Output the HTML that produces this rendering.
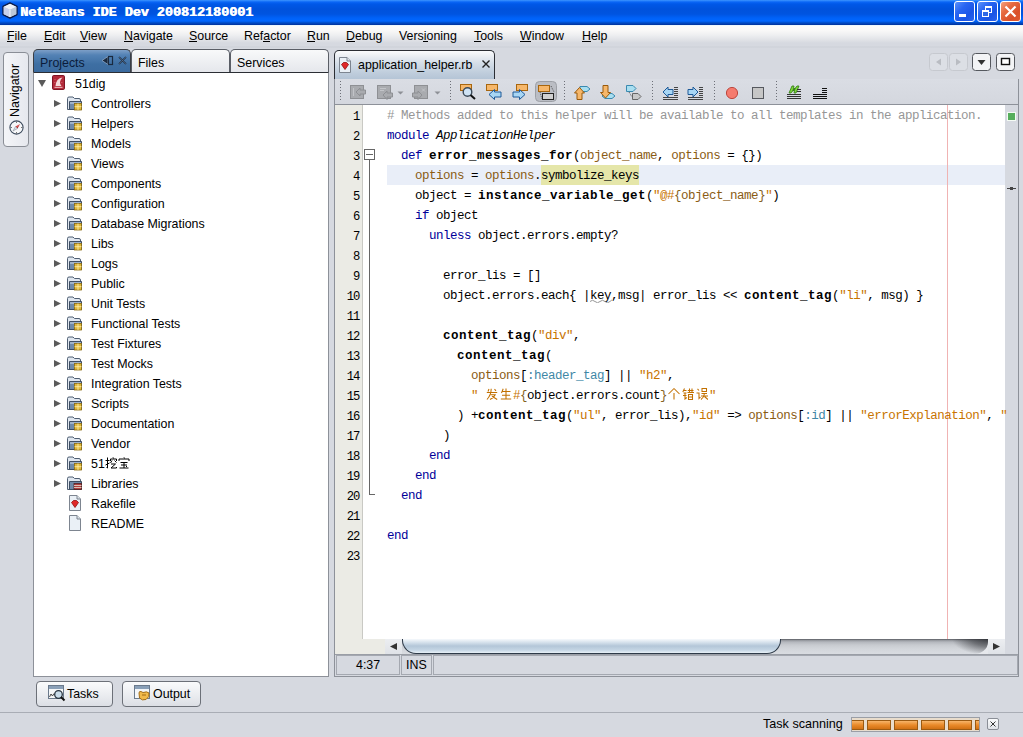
<!DOCTYPE html>
<html><head><meta charset="utf-8"><style>
*{margin:0;padding:0;box-sizing:border-box}
html,body{width:1023px;height:737px;overflow:hidden;background:#d6d9e0;font-family:"Liberation Sans",sans-serif;font-size:12.4px;color:#000}
.a{position:absolute}
.t{position:absolute;white-space:pre;line-height:1}
#title{left:0;top:0;width:1023px;height:25px;background:linear-gradient(#3d95ff 0,#0a66f6 2px,#0058e8 4px,#0052dc 9px,#0054e0 14px,#0062f8 18px,#0066ff 21px,#0050d0 22.5px,#00309a 25px)}
#ttext{left:20px;top:6px;font-family:"Liberation Mono",monospace;font-weight:bold;font-size:13.4px;color:#fff;text-shadow:0.7px 0 0 #fff}
.wb{top:1px;width:21px;height:21px;border:1px solid #fff;border-radius:3px;background:linear-gradient(135deg,#5b92fb 0,#2865f2 35%,#1a55e6 70%,#2a64ee 100%)}
#menu{left:0;top:25px;width:1023px;height:23px;background:linear-gradient(#e4f4fe 0,#fbfbfa 1.5px,#faf9f8 5px,#eeeff1 10px,#dddfe4 16px,#d6d9e0 18px,#d6d9e0 21px,#ccd0d7 22px,#d6d9e0 23px)}
.mi{top:30px}
.ul{position:absolute;height:1px;background:#000}
.tab{position:absolute;border:1px solid #3a3d44;border-bottom:none;border-radius:5px 5px 0 0}
.code{position:absolute;left:387px;font-family:"Liberation Mono",monospace;font-size:12.5px;letter-spacing:-0.5px;white-space:pre;line-height:20px;color:#000;margin-top:1px}
.kw{color:#000099}.cm{color:#969696}.b{font-weight:bold;letter-spacing:0.5px}.pa{color:#8a5c14}.st{color:#c87400}.em{color:#86621e}.sy{color:#3f87a6}
.ln{position:absolute;width:20px;text-align:right;font-family:"Liberation Mono",monospace;font-size:12.2px;letter-spacing:-1.2px;line-height:20px;margin-top:1px}
.it{font-style:italic}.wv{}</style></head><body>
<div id="title" class="a"></div>
<svg class="a" style="left:2px;top:2px" width="16" height="17" viewBox="0 0 16 17">
<path d="M8 1 L15 4.5 L15 12.5 L8 16 L1 12.5 L1 4.5 Z" fill="#c9d3e6" stroke="#0a1a48" stroke-width="1.4" stroke-linejoin="round"/>
<path d="M1.7 4.8 L8 7.8 L14.3 4.8 L8 1.8 Z" fill="#eef2f8"/>
<path d="M8 7.8 L8 15.2 L14.3 12.2 L14.3 4.8 Z" fill="#bcc8d8"/>
<path d="M1.7 4.8 L8 7.8 L8 15.2 L1.7 12.2Z" fill="#c8d0ec"/>
<path d="M8 7.8 V15" stroke="#f4f8ff" stroke-width="1"/>
</svg>
<div id="ttext" class="t">NetBeans IDE Dev 200812180001</div>
<div class="a wb" style="left:954px"></div>
<div class="a wb" style="left:977px"></div>
<div class="a wb" style="left:1000px;background:linear-gradient(135deg,#f4a27f 0,#e66a3f 35%,#d9502a 70%,#e05a30 100%)"></div>
<div class="a" style="left:959px;top:14px;width:7px;height:3px;background:#fff"></div>
<div class="a" style="left:985px;top:6px;width:7px;height:7px;border:1px solid #fff;border-top-width:2px"></div>
<div class="a" style="left:982px;top:10px;width:7px;height:7px;border:1px solid #fff;border-top-width:2px;background:#2f68e6"></div>
<svg class="a" style="left:1004px;top:5px" width="13" height="13" viewBox="0 0 13 13"><path d="M1.5 1.5 L11.5 11.5 M11.5 1.5 L1.5 11.5" stroke="#fff" stroke-width="2.2"/></svg>
<div id="menu" class="a"></div>
<div class="t mi" style="left:7px">File</div>
<div class="t mi" style="left:44px">Edit</div>
<div class="t mi" style="left:80px">View</div>
<div class="t mi" style="left:124px">Navigate</div>
<div class="t mi" style="left:189px">Source</div>
<div class="t mi" style="left:244px">Refactor</div>
<div class="t mi" style="left:307px">Run</div>
<div class="t mi" style="left:346px">Debug</div>
<div class="t mi" style="left:399px">Versioning</div>
<div class="t mi" style="left:474px">Tools</div>
<div class="t mi" style="left:520px">Window</div>
<div class="t mi" style="left:582px">Help</div>
<div class="ul" style="left:7px;top:41px;width:7px"></div>
<div class="ul" style="left:44px;top:41px;width:8px"></div>
<div class="ul" style="left:80px;top:41px;width:8px"></div>
<div class="ul" style="left:124px;top:41px;width:9px"></div>
<div class="ul" style="left:189px;top:41px;width:8px"></div>
<div class="ul" style="left:263px;top:41px;width:7px"></div>
<div class="ul" style="left:307px;top:41px;width:8px"></div>
<div class="ul" style="left:346px;top:41px;width:9px"></div>
<div class="ul" style="left:423px;top:41px;width:5px"></div>
<div class="ul" style="left:474px;top:41px;width:7px"></div>
<div class="ul" style="left:520px;top:41px;width:11px"></div>
<div class="ul" style="left:582px;top:41px;width:9px"></div>
<div class="a" style="left:3px;top:52px;width:26px;height:95px;border:1px solid #8a8e96;border-radius:4px;background:linear-gradient(90deg,#f4f5f8,#e6e8ee)"></div>
<div class="t" style="left:9px;top:117px;transform-origin:0 0;transform:rotate(-90deg);font-size:12.4px">Navigator</div>
<svg class="a" style="left:9px;top:120px" width="15" height="15" viewBox="0 0 15 15"><circle cx="7.5" cy="7.5" r="6.6" fill="#f6f7f9" stroke="#3e4c5e" stroke-width="1.1"/><path d="M7.5 1.5 V3 M7.5 12 V13.5 M1.5 7.5 H3 M12 7.5 H13.5" stroke="#555" stroke-width="0.8"/><path d="M11 4 L6.5 6.5 L7.5 7.5 Z" fill="#e23a3a"/><path d="M11 4 L8.5 8.5 L7.5 7.5Z" fill="#b01e1e"/><path d="M4 11 L6.5 6.5 L8.5 8.5Z" fill="#d8dde4" stroke="#7a8290" stroke-width="0.5"/></svg>
<div class="a" style="left:33px;top:49px;width:296px;height:24px;background:#d6d9e0"></div>
<div class="tab" style="left:33px;top:49px;width:98px;height:24px;background:linear-gradient(#7d9fc7 0,#5382b5 5px,#3e6fa3 14px,#3a6a9e 24px)"></div>
<div class="tab" style="left:131px;top:49px;width:99px;height:24px;border-color:#5a5e66;background:linear-gradient(#f8f9fa,#e4e6eb)"></div>
<div class="tab" style="left:230px;top:49px;width:99px;height:24px;border-color:#5a5e66;background:linear-gradient(#f8f9fa,#e4e6eb)"></div>
<div class="a" style="left:33px;top:72px;width:296px;height:1px;background:#2b2e34"></div>
<div class="t" style="left:40px;top:57px;color:#0b1c3a">Projects</div>
<div class="t" style="left:138px;top:57px">Files</div>
<div class="t" style="left:237px;top:57px">Services</div>
<svg class="a" style="left:101px;top:55px" width="28" height="12" viewBox="0 0 28 12">
<path d="M1 5.5 L7 1.5 L7 9.5Z" fill="#1a2a40" stroke="#a8c0dc" stroke-width="0.6"/>
<rect x="7.5" y="1.5" width="4" height="8" fill="none" stroke="#1a2a40" stroke-width="1.2"/>
<path d="M18 2 L25 9 M25 2 L18 9" stroke="#1a2a40" stroke-width="1.6"/>
<path d="M18 2 L25 9 M25 2 L18 9" stroke="#a8c0dc" stroke-width="0.5" opacity="0.6"/>
</svg>
<div class="a" style="left:33px;top:72px;width:296px;height:605px;background:#fff;border:1px solid #8d9199;border-top-color:#2b2e34"></div>
<svg width="0" height="0" style="position:absolute"><defs>
<symbol id="fold" viewBox="0 0 17 16">
<path d="M1.5 3.5 Q1.5 2 3 2 L7 2 L8.5 3.5 L13 3.5 Q14.5 3.5 14.5 5 L14.5 14.5 L1.5 14.5Z" fill="#dfe6ef" stroke="#4e5e72" stroke-width="1"/>
<path d="M3.5 6.5 L15.5 6.5 L15.5 14.5 L3.5 14.5Z" fill="#6f8aa8" stroke="#3e4e62" stroke-width="1"/>
<path d="M4 7 L15 7 L15 9 L4 9Z" fill="#9fb3ca"/>
<rect x="8.5" y="8.5" width="7" height="6.5" fill="#e2b93a" stroke="#8a6a10" stroke-width="0.8"/>
<path d="M12 8.5 V15 M8.5 11.7 H15.5" stroke="#fff3b0" stroke-width="0.8"/>
</symbol>
<symbol id="libfold" viewBox="0 0 17 16">
<path d="M1.5 3.5 Q1.5 2 3 2 L7 2 L8.5 3.5 L13 3.5 Q14.5 3.5 14.5 5 L14.5 14.5 L1.5 14.5Z" fill="#dfe6ef" stroke="#4e5e72" stroke-width="1"/>
<path d="M3.5 6.5 L15.5 6.5 L15.5 14.5 L3.5 14.5Z" fill="#6f8aa8" stroke="#3e4e62" stroke-width="1"/>
<rect x="8" y="8.5" width="7.5" height="6" fill="#b04040" stroke="#502020" stroke-width="0.8"/>
<path d="M8 10.5 H15.5 M8 12.5 H15.5" stroke="#e8e0d0" stroke-width="0.8"/>
</symbol>
<symbol id="rubyfile" viewBox="0 0 14 16">
<path d="M1.5 0.5 L9 0.5 L12.5 4 L12.5 15.5 L1.5 15.5Z" fill="#eaf0f6" stroke="#7d8590" stroke-width="1"/>
<path d="M9 0.5 L9 4 L12.5 4" fill="#dde3ea" stroke="#7d8590" stroke-width="1"/>
<path d="M3.5 7.5 L5.5 5.5 L8.5 5.5 L10.5 7.5 L7 12.5Z" fill="#e02828" stroke="#901010" stroke-width="0.8"/>
</symbol>
<symbol id="tri-r" viewBox="0 0 7 7"><path d="M0 0 L7 3.5 L0 7Z" fill="#5a5a5a"/></symbol>
</defs></svg>
<svg class="a" style="left:38px;top:80px" width="8" height="7" viewBox="0 0 8 7"><path d="M0 0 L8 0 L4 7Z" fill="#5a5a5a"/></svg>
<svg class="a" style="left:52px;top:75px" width="13" height="15" viewBox="0 0 13 15">
<rect x="0.5" y="0.5" width="12" height="14" rx="1.2" fill="#b32a3a" stroke="#7e1424"/>
<path d="M3.5 11 Q4 7 5.5 5 Q7.5 2.5 10.5 2.5 Q8.5 4 8 7 Q7.8 9.5 9.5 11Z" fill="#f4dada"/>
<path d="M2.5 12.3 H10.5" stroke="#f0c8c8" stroke-width="1"/>
<path d="M2.5 4 L3 4.5 M2.3 7 L2.8 7.5 M9.8 7.5 L10.3 8" stroke="#f4b0b0" stroke-width="0.9"/>
</svg>
<div class="t" style="left:75px;top:78px">51dig</div>
<svg class="a" style="left:54px;top:100px" width="7" height="7"><use href="#tri-r"/></svg>
<svg class="a" style="left:66px;top:95px" width="17" height="16"><use href="#fold"/></svg>
<div class="t" style="left:91px;top:98px">Controllers</div>
<svg class="a" style="left:54px;top:120px" width="7" height="7"><use href="#tri-r"/></svg>
<svg class="a" style="left:66px;top:115px" width="17" height="16"><use href="#fold"/></svg>
<div class="t" style="left:91px;top:118px">Helpers</div>
<svg class="a" style="left:54px;top:140px" width="7" height="7"><use href="#tri-r"/></svg>
<svg class="a" style="left:66px;top:135px" width="17" height="16"><use href="#fold"/></svg>
<div class="t" style="left:91px;top:138px">Models</div>
<svg class="a" style="left:54px;top:160px" width="7" height="7"><use href="#tri-r"/></svg>
<svg class="a" style="left:66px;top:155px" width="17" height="16"><use href="#fold"/></svg>
<div class="t" style="left:91px;top:158px">Views</div>
<svg class="a" style="left:54px;top:180px" width="7" height="7"><use href="#tri-r"/></svg>
<svg class="a" style="left:66px;top:175px" width="17" height="16"><use href="#fold"/></svg>
<div class="t" style="left:91px;top:178px">Components</div>
<svg class="a" style="left:54px;top:200px" width="7" height="7"><use href="#tri-r"/></svg>
<svg class="a" style="left:66px;top:195px" width="17" height="16"><use href="#fold"/></svg>
<div class="t" style="left:91px;top:198px">Configuration</div>
<svg class="a" style="left:54px;top:220px" width="7" height="7"><use href="#tri-r"/></svg>
<svg class="a" style="left:66px;top:215px" width="17" height="16"><use href="#fold"/></svg>
<div class="t" style="left:91px;top:218px">Database Migrations</div>
<svg class="a" style="left:54px;top:240px" width="7" height="7"><use href="#tri-r"/></svg>
<svg class="a" style="left:66px;top:235px" width="17" height="16"><use href="#fold"/></svg>
<div class="t" style="left:91px;top:238px">Libs</div>
<svg class="a" style="left:54px;top:260px" width="7" height="7"><use href="#tri-r"/></svg>
<svg class="a" style="left:66px;top:255px" width="17" height="16"><use href="#fold"/></svg>
<div class="t" style="left:91px;top:258px">Logs</div>
<svg class="a" style="left:54px;top:280px" width="7" height="7"><use href="#tri-r"/></svg>
<svg class="a" style="left:66px;top:275px" width="17" height="16"><use href="#fold"/></svg>
<div class="t" style="left:91px;top:278px">Public</div>
<svg class="a" style="left:54px;top:300px" width="7" height="7"><use href="#tri-r"/></svg>
<svg class="a" style="left:66px;top:295px" width="17" height="16"><use href="#fold"/></svg>
<div class="t" style="left:91px;top:298px">Unit Tests</div>
<svg class="a" style="left:54px;top:320px" width="7" height="7"><use href="#tri-r"/></svg>
<svg class="a" style="left:66px;top:315px" width="17" height="16"><use href="#fold"/></svg>
<div class="t" style="left:91px;top:318px">Functional Tests</div>
<svg class="a" style="left:54px;top:340px" width="7" height="7"><use href="#tri-r"/></svg>
<svg class="a" style="left:66px;top:335px" width="17" height="16"><use href="#fold"/></svg>
<div class="t" style="left:91px;top:338px">Test Fixtures</div>
<svg class="a" style="left:54px;top:360px" width="7" height="7"><use href="#tri-r"/></svg>
<svg class="a" style="left:66px;top:355px" width="17" height="16"><use href="#fold"/></svg>
<div class="t" style="left:91px;top:358px">Test Mocks</div>
<svg class="a" style="left:54px;top:380px" width="7" height="7"><use href="#tri-r"/></svg>
<svg class="a" style="left:66px;top:375px" width="17" height="16"><use href="#fold"/></svg>
<div class="t" style="left:91px;top:378px">Integration Tests</div>
<svg class="a" style="left:54px;top:400px" width="7" height="7"><use href="#tri-r"/></svg>
<svg class="a" style="left:66px;top:395px" width="17" height="16"><use href="#fold"/></svg>
<div class="t" style="left:91px;top:398px">Scripts</div>
<svg class="a" style="left:54px;top:420px" width="7" height="7"><use href="#tri-r"/></svg>
<svg class="a" style="left:66px;top:415px" width="17" height="16"><use href="#fold"/></svg>
<div class="t" style="left:91px;top:418px">Documentation</div>
<svg class="a" style="left:54px;top:440px" width="7" height="7"><use href="#tri-r"/></svg>
<svg class="a" style="left:66px;top:435px" width="17" height="16"><use href="#fold"/></svg>
<div class="t" style="left:91px;top:438px">Vendor</div>
<svg class="a" style="left:54px;top:460px" width="7" height="7"><use href="#tri-r"/></svg>
<svg class="a" style="left:66px;top:455px" width="17" height="16"><use href="#fold"/></svg>
<div class="t" style="left:91px;top:458px">51</div>
<svg class="a" style="left:105px;top:457px" width="12" height="12" viewBox="0 0 12 12"><path d="M0.5 3.5 H4.5 M2.5 0.5 V11 L1.5 10.5 M0.5 8 L4.5 6 M8 0.3 L8.5 1.5 M5.5 4 V2 H11.5 V4 M7 3.5 L5.5 6 M9.5 3.5 L11.5 5.5 M6 7 H10.5 L6 11 H11.5 V10" fill="none" stroke="#000" stroke-width="1.0"/></svg><svg class="a" style="left:118px;top:457px" width="12" height="12" viewBox="0 0 12 12"><path d="M6 0.3 L6.5 1.5 M1 4 V2 H11 V4 M2.5 5.5 H9.5 M3 8 H9 M1.5 11 H10.5 M6 5.5 V11 M8 9 L9 10" fill="none" stroke="#000" stroke-width="1.0"/></svg>
<svg class="a" style="left:54px;top:480px" width="7" height="7"><use href="#tri-r"/></svg>
<svg class="a" style="left:66px;top:475px" width="17" height="16"><use href="#libfold"/></svg>
<div class="t" style="left:91px;top:478px">Libraries</div>
<svg class="a" style="left:68px;top:495px" width="14" height="16"><use href="#rubyfile"/></svg>
<div class="t" style="left:91px;top:498px">Rakefile</div>
<svg class="a" style="left:68px;top:515px" width="14" height="16" viewBox="0 0 14 16"><path d="M1.5 0.5 L9 0.5 L12.5 4 L12.5 15.5 L1.5 15.5Z" fill="#eaf0f6" stroke="#7d8590"/><path d="M9 0.5 L9 4 L12.5 4" fill="#dde3ea" stroke="#7d8590"/></svg>
<div class="t" style="left:91px;top:518px">README</div>
<div class="tab" style="left:334px;top:50px;width:161px;height:29px;border-color:#2b2e34;background:linear-gradient(#fbfcfd 0,#eef1f5 4px,#d5dee8 12px,#bfcddc 22px,#b3c3d5 29px)"></div>
<svg class="a" style="left:338px;top:57px" width="14" height="16"><use href="#rubyfile"/></svg>
<div class="t" style="left:358px;top:59px">application_helper.rb</div>
<svg class="a" style="left:482px;top:60px" width="8" height="8" viewBox="0 0 8 8"><path d="M0.5 0.5 L7.5 7.5 M7.5 0.5 L0.5 7.5" stroke="#222" stroke-width="1.4"/></svg>
<svg class="a" style="left:929px;top:52px" width="91" height="20" viewBox="0 0 91 20">
<rect x="0.5" y="1.5" width="18" height="17" rx="3" fill="#dcdfe5" stroke="#c6c9cf"/>
<path d="M7 10 L12 6.5 L12 13.5Z" fill="#b9bcc2"/>
<rect x="20.5" y="1.5" width="18" height="17" rx="3" fill="#dcdfe5" stroke="#c6c9cf"/>
<path d="M32 10 L27 6.5 L27 13.5Z" fill="#b9bcc2"/>
<rect x="43.5" y="1.5" width="18" height="17" rx="3" fill="#f3f4f6" stroke="#55585e"/>
<path d="M48.5 8 L56.5 8 L52.5 13Z" fill="#333"/>
<rect x="67.5" y="1.5" width="18" height="17" rx="3" fill="#f3f4f6" stroke="#55585e"/>
<rect x="72.5" y="6.5" width="8" height="6" fill="#fff" stroke="#111" stroke-width="1.4"/>
</svg>
<div class="a" style="left:334px;top:79px;width:685px;height:598px;border:1px solid #8d9199;border-top:none;background:#d6d9e0"></div>
<div class="a" style="left:335px;top:79px;width:683px;height:26px;background:linear-gradient(#dadde4,#d4d7de)"></div>
<div class="a" style="left:335px;top:104px;width:683px;height:1px;background:#8d9199"></div>
<div class="a" style="left:340px;top:81px;width:1px;height:21px;background:repeating-linear-gradient(#6d7078 0,#6d7078 1px,transparent 1px,transparent 3px)"></div>
<div class="a" style="left:450px;top:81px;width:1px;height:21px;background:repeating-linear-gradient(#6d7078 0,#6d7078 1px,transparent 1px,transparent 3px)"></div>
<div class="a" style="left:564px;top:81px;width:1px;height:21px;background:repeating-linear-gradient(#6d7078 0,#6d7078 1px,transparent 1px,transparent 3px)"></div>
<div class="a" style="left:652px;top:81px;width:1px;height:21px;background:repeating-linear-gradient(#6d7078 0,#6d7078 1px,transparent 1px,transparent 3px)"></div>
<div class="a" style="left:714px;top:81px;width:1px;height:21px;background:repeating-linear-gradient(#6d7078 0,#6d7078 1px,transparent 1px,transparent 3px)"></div>
<div class="a" style="left:776px;top:81px;width:1px;height:21px;background:repeating-linear-gradient(#6d7078 0,#6d7078 1px,transparent 1px,transparent 3px)"></div>
<svg class="a" style="left:335px;top:79px" width="500" height="26" viewBox="335 79 500 26">
<!-- disabled icons -->
<rect x="350.5" y="85.5" width="13" height="13" fill="#a9abaf" stroke="#8e9094"/>
<path d="M353.5 88 V96" stroke="#c2c4c8" stroke-width="1"/>
<path d="M356 92 L360 88 V90 H365.5 V94 H360 V96Z" fill="#a9abaf" stroke="#8e9094"/>
<rect x="377.5" y="85.5" width="13" height="13" fill="#a9abaf" stroke="#8e9094"/>
<path d="M380 88.5 H386 M380 90.5 H384" stroke="#c2c4c8" stroke-width="1"/>
<path d="M383 95 L387 91 V93 H392.5 V97 H387 V99.5Z" fill="#a9abaf" stroke="#8e9094"/>
<path d="M397.5 91.5 H403.5 L400.5 94.5Z" fill="#8d9096"/>
<rect x="414.5" y="85.5" width="13" height="13" fill="#a9abaf" stroke="#8e9094"/>
<path d="M422 88.5 L425 91.5 M425 88.5 L422 91.5" stroke="#c2c4c8" stroke-width="1"/>
<path d="M422 95 L418 91 V93 H412.5 V97 H418 V99.5Z" fill="#a9abaf" stroke="#8e9094"/>
<path d="M434.5 91.5 H440.5 L437.5 94.5Z" fill="#8d9096"/>
<!-- find -->
<rect x="460.5" y="84.5" width="11" height="6" fill="#f6b76a" stroke="#a8660e"/>
<circle cx="467.5" cy="92" r="4.3" fill="#cfe3f4" stroke="#3c4a58" stroke-width="1.4"/>
<path d="M470.5 95 L475 99" stroke="#111" stroke-width="2"/>
<!-- find prev -->
<rect x="486.5" y="84.5" width="11" height="6" fill="#f6b76a" stroke="#a8660e"/>
<path d="M489 94.5 L494.5 89.5 V92 H501 V97 H494.5 V99.5Z" fill="#a8d6f4" stroke="#1e5a98" stroke-width="1"/>
<!-- find next -->
<rect x="516.5" y="84.5" width="11" height="6" fill="#f6b76a" stroke="#a8660e"/>
<path d="M525 94.5 L519.5 89.5 V92 H513 V97 H519.5 V99.5Z" fill="#a8d6f4" stroke="#1e5a98" stroke-width="1"/>
<!-- toggle highlight pressed -->
<rect x="535.5" y="81.5" width="21" height="20" rx="4" fill="#babdc4" stroke="#9da0a6"/>
<rect x="538.5" y="85.5" width="11" height="6" fill="#f6b76a" stroke="#a8660e"/>
<rect x="542.5" y="93.5" width="11" height="6" fill="#d0d0d0" stroke="#222"/>
<path d="M540 92 L542 99 M551 86 L554 92" stroke="#333" stroke-width="0.8" stroke-dasharray="1 1"/>
<!-- prev bookmark -->
<path d="M580 86.5 H587 L590 89 L587 91.5 H580Z" fill="#a8def0" stroke="#3a8ab0"/>
<path d="M574.5 93 L579.5 87.5 L584.5 93 H582 V99.5 H577 V93Z" fill="#f6b76a" stroke="#9a5a0a"/>
<!-- next bookmark -->
<path d="M605 93.5 H612 L615 96 L612 98.5 H605 L602 96Z" fill="#a8def0" stroke="#3a8ab0"/>
<path d="M600.5 92.5 L605.5 98 L610.5 92.5 H608 V85.5 H603 V92.5Z" fill="#f6b76a" stroke="#9a5a0a"/>
<!-- toggle bookmark -->
<path d="M626.5 85.5 H633 L636 88.5 L633 91.5 H626.5Z" fill="#a8def0" stroke="#3a8ab0"/>
<path d="M632.5 93.5 H638 L641 96.5 L638 99.5 H632.5Z" fill="#c8c8c8" stroke="#666"/>
<path d="M629 92 L632 97" stroke="#333" stroke-width="0.8" stroke-dasharray="1 1"/>
<!-- shift left -->
<path d="M663 92 L668 87 V89.5 H673 V94.5 H668 V97Z" fill="#a8d6f4" stroke="#1e5a98"/>
<path d="M674 87.5 H678 M674 89.5 H678 M674 91.5 H678 M674 93.5 H678 M674 95.5 H678 M663 97.5 H678 M663 99.5 H678" stroke="#444" stroke-width="1"/>
<!-- shift right -->
<path d="M698 92 L693 87 V89.5 H688 V94.5 H693 V97Z" fill="#a8d6f4" stroke="#1e5a98"/>
<path d="M699 87.5 H703 M699 89.5 H703 M699 91.5 H703 M699 93.5 H703 M699 95.5 H703 M688 97.5 H703 M688 99.5 H703" stroke="#444" stroke-width="1"/>
<!-- record -->
<circle cx="732" cy="93" r="5.6" fill="#f57b6e" stroke="#b83c32" stroke-width="0.9"/>
<!-- stop -->
<rect x="752.5" y="87.5" width="11" height="11" fill="#c6c6c6" stroke="#55585e"/>
<!-- macro -->
<path d="M789 93 L792 86 L794 86 L793 91 L797 86 L799 86 L796 93 L794 93 L795 88 L791 93Z" fill="#7ed63a" stroke="#2e7a10" stroke-width="0.8"/>
<path d="M797 89.5 H801 M797 91.5 H801 M787 94.5 H801 M787 96.5 H801 M787 98.5 H801" stroke="#333" stroke-width="1"/>
<!-- last -->
<path d="M822 88.5 H827 M822 90.5 H827 M822 92.5 H827 M813 94.5 H827 M813 96.5 H827 M813 98.5 H827" stroke="#111" stroke-width="1"/>
</svg>
<div class="a" style="left:335px;top:105px;width:28px;height:549px;background:#ebebe5"></div>
<div class="a" style="left:362px;top:105px;width:1px;height:534px;background:#c9c9c4"></div>
<div class="a" style="left:363px;top:105px;width:642px;height:534px;background:#fff"></div>
<div class="a" style="left:385px;top:639px;width:-0px;height:0"></div>
<div class="a" style="left:387px;top:165px;width:618px;height:20px;background:#e9eef8"></div>
<div class="a" style="left:541px;top:165px;width:98px;height:20px;background:#e5e6a9"></div>
<div class="a" style="left:947px;top:105px;width:1px;height:534px;background:#f0b3b3"></div>
<div class="a" style="left:1005px;top:105px;width:13px;height:549px;background:#d6d9e0"></div>
<div class="a" style="left:1007px;top:112px;width:9px;height:9px;background:#56ae5c;border:1px solid #f4fbf4"></div>
<div class="a" style="left:1007px;top:188px;width:9px;height:1px;background:#444"></div>
<div class="a" style="left:1010px;top:187px;width:3px;height:3px;background:#444"></div>
<div class="ln" style="left:339px;top:106px">1</div>
<div class="ln" style="left:339px;top:126px">2</div>
<div class="ln" style="left:339px;top:146px">3</div>
<div class="ln" style="left:339px;top:166px">4</div>
<div class="ln" style="left:339px;top:186px">5</div>
<div class="ln" style="left:339px;top:206px">6</div>
<div class="ln" style="left:339px;top:226px">7</div>
<div class="ln" style="left:339px;top:246px">8</div>
<div class="ln" style="left:339px;top:266px">9</div>
<div class="ln" style="left:339px;top:286px">10</div>
<div class="ln" style="left:339px;top:306px">11</div>
<div class="ln" style="left:339px;top:326px">12</div>
<div class="ln" style="left:339px;top:346px">13</div>
<div class="ln" style="left:339px;top:366px">14</div>
<div class="ln" style="left:339px;top:386px">15</div>
<div class="ln" style="left:339px;top:406px">16</div>
<div class="ln" style="left:339px;top:426px">17</div>
<div class="ln" style="left:339px;top:446px">18</div>
<div class="ln" style="left:339px;top:466px">19</div>
<div class="ln" style="left:339px;top:486px">20</div>
<div class="ln" style="left:339px;top:506px">21</div>
<div class="ln" style="left:339px;top:526px">22</div>
<div class="ln" style="left:339px;top:546px">23</div>
<div class="a" style="left:364px;top:149px;width:11px;height:11px;border:1px solid #666;background:#fff"></div>
<div class="a" style="left:366px;top:154px;width:7px;height:1px;background:#666"></div>
<div class="a" style="left:369px;top:160px;width:1px;height:335px;background:#666"></div>
<div class="a" style="left:369px;top:494px;width:6px;height:1px;background:#666"></div>
<div class="code" style="top:105px"><span class="cm"># Methods added to this helper will be available to all templates in the application.</span></div>
<div class="code" style="top:125px"><span class="kw">module</span> <span class="it">ApplicationHelper</span></div>
<div class="code" style="top:145px">  <span class="kw">def</span> <span class="b">error_messages_for</span>(<span class="pa">object_name</span>, <span class="pa">options</span> = {})</div>
<div class="code" style="top:165px">    <span class="pa">options</span> = <span class="pa">options</span>.symbolize_keys</div>
<div class="code" style="top:185px">    object = <span class="b">instance_variable_get</span>(<span class="st">″@#</span><span class="em">{</span><span class="pa">object_name</span><span class="em">}</span><span class="st">″</span>)</div>
<div class="code" style="top:205px">    <span class="kw">if</span> object</div>
<div class="code" style="top:225px">      <span class="kw">unless</span> object.errors.empty?</div>
<div class="code" style="top:265px">        error_lis = []</div>
<div class="code" style="top:285px">        object.errors.each{ |<span class="wv">key</span>,msg| error_lis &lt;&lt; <span class="b">content_tag</span>(<span class="st">″li″</span>, msg) }</div>
<div class="code" style="top:325px">        <span class="b">content_tag</span>(<span class="st">″div″</span>,</div>
<div class="code" style="top:345px">          <span class="b">content_tag</span>(</div>
<div class="code" style="top:365px">            <span class="pa">options</span>[<span class="sy">:header_tag</span>] || <span class="st">″h2″</span>,</div>
<div class="code" style="top:385px">            <span class="st">″     #</span><span class="em">{</span>object.errors.count<span class="em">}</span><span class="st">      ″</span></div>
<div class="code" style="top:405px">          ) +<span class="b">content_tag</span>(<span class="st">″ul″</span>, error_lis),<span class="st">″id″</span> =&gt; <span class="pa">options</span>[<span class="sy">:id</span>] || <span class="st">″errorExplanation″</span>, <span class="st">″</span></div>
<div class="code" style="top:425px">        )</div>
<div class="code" style="top:445px">      <span class="kw">end</span></div>
<div class="code" style="top:465px">    <span class="kw">end</span></div>
<div class="code" style="top:485px">  <span class="kw">end</span></div>
<div class="code" style="top:525px"><span class="kw">end</span></div>
<svg class="a" style="left:590px;top:299px" width="22" height="4" viewBox="0 0 22 4"><path d="M0 2.5 Q2.5 0 5 2.5 T10 2.5 T15 2.5 T20 2.5 T22 1.5" fill="none" stroke="#8a8a8a" stroke-width="0.9"/></svg>
<svg class="a" style="left:486px;top:388px" width="12" height="12" viewBox="0 0 12 12"><path d="M3 1 L2 3.5 M0.8 4.5 H11.2 M5.2 0.8 Q5.2 7 1 11.5 M4.8 6.8 H9.2 Q8 9.8 4 11.5 M6 8.2 L11.2 11.5 M8.5 1.2 L10 2.8" fill="none" stroke="#c27000" stroke-width="1.05"/></svg>
<svg class="a" style="left:500px;top:388px" width="12" height="12" viewBox="0 0 12 12"><path d="M3.2 0.8 L1.5 5 M2.5 3.5 H10.5 M2 7.2 H10 M0.8 11 H11.2 M6 0.5 V11" fill="none" stroke="#c27000" stroke-width="1.05"/></svg>
<svg class="a" style="left:668px;top:388px" width="12" height="12" viewBox="0 0 12 12"><path d="M6 0.5 L0.5 6 M6 0.5 L11.5 6 M6 5 V11.5" fill="none" stroke="#c27000" stroke-width="1.05"/></svg>
<svg class="a" style="left:682px;top:388px" width="12" height="12" viewBox="0 0 12 12"><path d="M2.5 0.5 L0.8 4 M2 2.5 H4.5 M1.5 5 H4.5 M1 7.5 H4.5 M3 5 V11 L4.8 9.5 M5.8 2.5 H11.5 M7.5 0.5 V4.5 M10 0.5 V4.5 M5.5 4.5 H12 M6.5 6.5 H10.5 V11.5 H6.5Z M6.5 9 H10.5" fill="none" stroke="#c27000" stroke-width="1.05"/></svg>
<svg class="a" style="left:696px;top:388px" width="12" height="12" viewBox="0 0 12 12"><path d="M1.5 0.8 L3 2.5 M0.5 5 H3 V10.5 L4.5 9 M6 0.5 H10.5 V3.5 H6Z M5.5 5.5 H11 M5 8 H12 M8.5 5.5 Q8 9.5 5 11.5 M8.5 8.5 L12 11.5" fill="none" stroke="#c27000" stroke-width="1.05"/></svg>
<div class="a" style="left:335px;top:639px;width:50px;height:15px;background:#ebebe5"></div>
<div class="a" style="left:385px;top:639px;width:620px;height:15px;background:#e6e8ec"></div>
<div class="a" style="left:385px;top:639px;width:603px;height:15px;border-radius:0 0 14px 0 / 0 0 12px 0;background:linear-gradient(#4a4d53 0,#8e9197 1px,#b4b7bd 3px,#c8cbd0 6px,#d3d6db 10px,#d9dce1 15px)"></div>
<div class="a" style="left:950px;top:639px;width:38px;height:15px;border-radius:0 0 14px 0 / 0 0 12px 0;background:radial-gradient(ellipse 36px 16px at 100% 0,rgba(45,47,52,0.85) 0,rgba(45,47,52,0.55) 45%,rgba(45,47,52,0) 100%)"></div>
<div class="a" style="left:385px;top:639px;width:17px;height:15px;background:linear-gradient(#eceef1,#dfe2e7)"></div>
<div class="a" style="left:988px;top:639px;width:17px;height:15px;background:linear-gradient(#eceef1,#dfe2e7)"></div>
<svg class="a" style="left:390px;top:643px" width="7" height="7" viewBox="0 0 7 7"><path d="M0 3.5 L7 0 L7 7Z" fill="#333"/></svg>
<svg class="a" style="left:993px;top:643px" width="7" height="7" viewBox="0 0 7 7"><path d="M7 3.5 L0 0 L0 7Z" fill="#333"/></svg>
<div class="a" style="left:402px;top:639px;width:379px;height:15px;border:1px solid #2e3a48;border-top:none;border-radius:0 0 14px 14px / 0 0 14px 14px;background:linear-gradient(#f6f9fc 0,#d9e4ee 3px,#b3c6d8 7px,#c4d5e4 11px,#e8f1f8 14px)"></div>
<div class="a" style="left:335px;top:654px;width:683px;height:1px;background:#9a9ea6"></div>
<div class="a" style="left:336px;top:655px;width:64px;height:20px;border:1px solid #a4a8b0;background:#d6d9e0"></div>
<div class="a" style="left:401px;top:655px;width:31px;height:20px;border:1px solid #a4a8b0;background:#d6d9e0"></div>
<div class="a" style="left:433px;top:655px;width:585px;height:20px;border:1px solid #a4a8b0;border-right-color:#a4a8b0;background:#d6d9e0"></div>
<div class="t" style="left:356px;top:659px">4:37</div>
<div class="t" style="left:406px;top:659px">INS</div>
<div class="a" style="left:36px;top:681px;width:77px;height:26px;border:1px solid #6c7078;border-radius:4px;background:linear-gradient(#fafbfc,#e9ebef 60%,#dcdfe5)"></div>
<div class="a" style="left:122px;top:681px;width:79px;height:26px;border:1px solid #6c7078;border-radius:4px;background:linear-gradient(#fafbfc,#e9ebef 60%,#dcdfe5)"></div>
<svg class="a" style="left:48px;top:685px" width="18" height="17" viewBox="0 0 18 17">
<rect x="0.5" y="0.5" width="15" height="13" fill="#f4f6f8" stroke="#6b7a8c"/><rect x="1" y="1" width="14" height="3" fill="#8aa0b8"/>
<circle cx="10.5" cy="9.5" r="3.8" fill="#c9dcea" stroke="#283440" stroke-width="1.3"/><path d="M13 12 L16.5 15.5" stroke="#111" stroke-width="2"/>
<path d="M1.5 12 L3 9 L4.5 11 L6 8.5" stroke="#333" fill="none" stroke-width="0.9"/></svg>
<div class="t" style="left:67px;top:688px">Tasks</div>
<svg class="a" style="left:134px;top:685px" width="18" height="17" viewBox="0 0 18 17">
<rect x="0.5" y="0.5" width="15" height="13" fill="#f4f6f8" stroke="#6b7a8c"/><rect x="1" y="1" width="14" height="3" fill="#8aa0b8"/>
<path d="M5 8 Q5 6 7 6.5 L9 7.5 Q13 6 15 8 Q16 12 12 14.5 Q8 16 5.5 13 Z" fill="#f1b94a" stroke="#9a6410" stroke-width="0.9"/>
<path d="M8 10 H12" stroke="#9a6410" stroke-width="0.9"/></svg>
<div class="t" style="left:153px;top:688px">Output</div>
<div class="a" style="left:0;top:712px;width:1023px;height:1px;background:#a9adb5"></div>
<div class="t" style="left:763px;top:718px;font-size:12.6px">Task scanning</div>
<div class="a" style="left:851px;top:717px;width:129px;height:15px;border:1px solid #9a9ea6;background:#e8dccc;overflow:hidden"><div class="a" style="left:-12px;top:2px;width:24px;height:10px;background:linear-gradient(#f7b56a,#e98a2a 50%,#d07014);border:1px solid #9a5a12"></div><div class="a" style="left:15px;top:2px;width:24px;height:10px;background:linear-gradient(#f7b56a,#e98a2a 50%,#d07014);border:1px solid #9a5a12"></div><div class="a" style="left:42px;top:2px;width:24px;height:10px;background:linear-gradient(#f7b56a,#e98a2a 50%,#d07014);border:1px solid #9a5a12"></div><div class="a" style="left:69px;top:2px;width:24px;height:10px;background:linear-gradient(#f7b56a,#e98a2a 50%,#d07014);border:1px solid #9a5a12"></div><div class="a" style="left:96px;top:2px;width:24px;height:10px;background:linear-gradient(#f7b56a,#e98a2a 50%,#d07014);border:1px solid #9a5a12"></div><div class="a" style="left:123px;top:2px;width:24px;height:10px;background:linear-gradient(#f7b56a,#e98a2a 50%,#d07014);border:1px solid #9a5a12"></div></div>
<div class="a" style="left:987px;top:718px;width:12px;height:12px;border:1px solid #8a8e96;border-radius:2px;background:linear-gradient(#fafbfc,#dfe2e7)"></div>
<svg class="a" style="left:990px;top:721px" width="6" height="6" viewBox="0 0 6 6"><path d="M0.5 0.5 L5.5 5.5 M5.5 0.5 L0.5 5.5" stroke="#333" stroke-width="1"/></svg>
</body></html>
